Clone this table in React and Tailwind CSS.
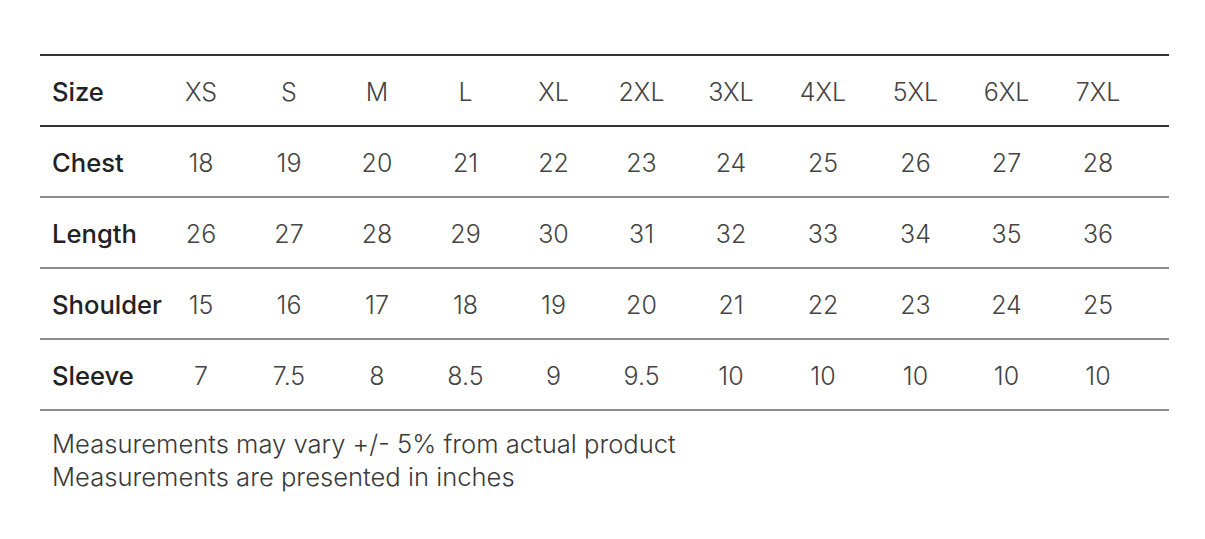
import React from "react";

const sizes = ["XS", "S", "M", "L", "XL", "2XL", "3XL", "4XL", "5XL", "6XL", "7XL"];
const rows = [
  ["Chest", ["18", "19", "20", "21", "22", "23", "24", "25", "26", "27", "28"]],
  ["Length", ["26", "27", "28", "29", "30", "31", "32", "33", "34", "35", "36"]],
  ["Shoulder", ["15", "16", "17", "18", "19", "20", "21", "22", "23", "24", "25"]],
  ["Sleeve", ["7", "7.5", "8", "8.5", "9", "9.5", "10", "10", "10", "10", "10"]],
];

const cols = "grid grid-cols-[117px_88px_88px_88px_89px_87px_89px_90px_94px_91px_91px_92px_1fr]";

export default function App() {
  return (
    <div className="w-[1205px] h-[539px] bg-white pt-[54px] px-[40px]" style={{ fontFamily: "Inter, 'Liberation Sans', sans-serif" }}>
      <div className="w-[1129px] border-t-2 border-[#333333]">
        <div className={`${cols} h-[71px] pt-[4px] items-center border-b-2 border-[#333333]`}>
          <div className="pl-3 text-[25.6px] font-medium text-[#222222]">Size</div>
          {sizes.map((s) => (
            <div key={s} className="text-center text-[25px] font-light text-[#444444]">{s}</div>
          ))}
          <div />
        </div>
        {rows.map(([label, vals]) => (
          <div key={label} className={`${cols} h-[71px] pt-[4px] items-center border-b-2 border-[#8c8c8c]`}>
            <div className="pl-3 text-[25.6px] font-medium text-[#222222]">{label}</div>
            {vals.map((v, i) => (
              <div key={i} className="text-center text-[25px] font-light text-[#444444]">{v}</div>
            ))}
            <div />
          </div>
        ))}
      </div>
      <div className="pl-3 mt-[16px] text-[25.6px] leading-[33px] font-light text-[#3a3a3a]">
        <div>Measurements may vary +/- 5% from actual product</div>
        <div>Measurements are presented in inches</div>
      </div>
    </div>
  );
}
